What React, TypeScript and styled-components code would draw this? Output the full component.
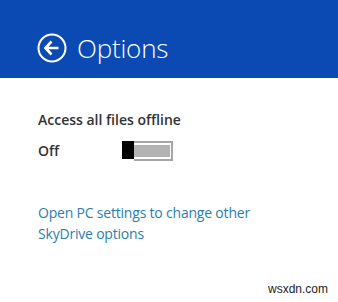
import React from "react";
import styled, { createGlobalStyle } from "styled-components";

const Global = createGlobalStyle`
  html, body { margin: 0; padding: 0; background: #ffffff; }
  body { font-family: "Open Sans", "Noto Sans", sans-serif; }
`;

const Page = styled.div`
  width: 338px;
  height: 302px;
  display: flex;
  flex-direction: column;
  background: #ffffff;
  position: relative;
  overflow: hidden;
`;

const Header = styled.header`
  height: 78px;
  background: #0b4ab2;
  display: flex;
  align-items: flex-end;
  padding: 0 0 13px 37px;
  box-sizing: border-box;
  gap: 10px;
`;

const BackButton = styled.div`
  width: 30px;
  height: 30px;
  display: flex;
  align-items: center;
  justify-content: center;
  margin-bottom: 2px;
`;

const Title = styled.h1`
  margin: 0;
  font-family: "Open Sans", "Noto Sans", sans-serif;
  font-weight: 300;
  font-size: 26px;
  letter-spacing: -0.2px;
  line-height: 34px;
  color: #ffffff;
`;

const Body = styled.main`
  display: flex;
  flex-direction: column;
  padding: 32px 0 0 38px;
`;

const Label = styled.div`
  font-size: 14px;
  font-weight: 600;
  color: #333333;
  line-height: 20px;
`;

const ToggleRow = styled.div`
  display: flex;
  align-items: center;
  margin-top: 10px;
  height: 20px;
`;

const State = styled.span`
  width: 84px;
  font-size: 14px;
  font-weight: 600;
  color: #333333;
`;

const Toggle = styled.div`
  display: flex;
  height: 18px;
`;

const Thumb = styled.div`
  width: 12px;
  height: 18px;
  background: #000000;
`;

const Track = styled.div`
  width: 36px;
  height: 14px;
  border: 2px solid #a6a6a6;
  border-left: none;
  padding: 1px 1px 1px 0;
  box-sizing: content-box;
  display: flex;
`;

const TrackFill = styled.div`
  flex: 1;
  background: #b3b3b3;
  margin: 1px 0;
  height: 12px;
`;

const Link = styled.a`
  margin-top: 42px;
  width: 240px;
  font-size: 14px;
  letter-spacing: -0.2px;
  line-height: 21px;
  color: #2a7eab;
  text-decoration: none;
`;

const Watermark = styled.span`
  position: absolute;
  right: 10px;
  bottom: 6px;
  font-family: "Liberation Sans", Arial, sans-serif;
  font-size: 12px;
  color: #222222;
`;

export default function App() {
  return (
    <Page>
      <Global />
      <Header>
        <BackButton>
          <svg width="30" height="30" viewBox="0 0 30 30">
            <circle cx="15" cy="15" r="13.5" fill="none" stroke="#fff" strokeWidth="2" />
            <path d="M8.5 15 H21.5 M14.5 8.5 L8.5 15 L14.5 21.5" fill="none" stroke="#fff" strokeWidth="2.6" strokeLinecap="butt" strokeLinejoin="miter" />
          </svg>
        </BackButton>
        <Title>Options</Title>
      </Header>
      <Body>
        <Label>Access all files offline</Label>
        <ToggleRow>
          <State>Off</State>
          <Toggle>
            <Thumb />
            <Track>
              <TrackFill />
            </Track>
          </Toggle>
        </ToggleRow>
        <Link href="#">Open PC settings to change other SkyDrive options</Link>
      </Body>
      <Watermark>wsxdn.com</Watermark>
    </Page>
  );
}
